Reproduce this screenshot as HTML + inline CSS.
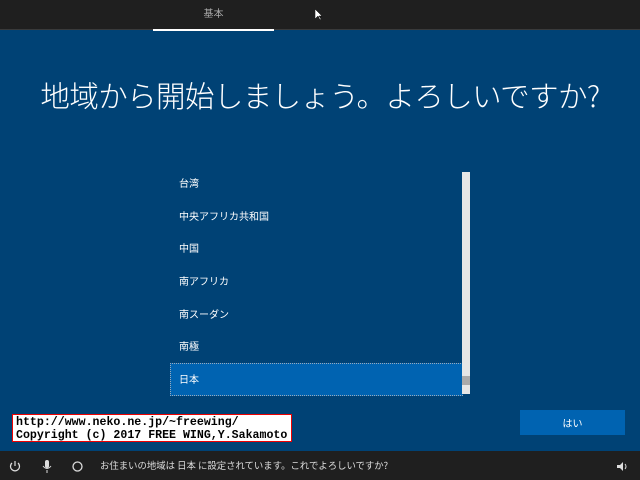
<!DOCTYPE html>
<html><head><meta charset="utf-8"><style>
*{margin:0;padding:0;box-sizing:border-box}
body{width:640px;height:480px;overflow:hidden;background:#004275;font-family:"Liberation Sans","Noto Sans CJK JP",sans-serif;color:#fff;position:relative}
.top{position:absolute;left:0;top:0;width:640px;height:30px;background:#1f1f1f;border-bottom:1px solid #3a3a3a}
.tab{position:absolute;left:153px;top:0;width:121px;height:30px;text-align:center;font-size:10px;line-height:30px;color:#aaa}
.tab:after{content:"";position:absolute;left:0;bottom:-1px;width:121px;height:2px;background:#fff}
h1{position:absolute;left:0;top:74px;width:640px;text-align:center;font-weight:300;font-size:29.5px;line-height:42px;font-family:"Noto Sans CJK JP",sans-serif;letter-spacing:-0.6px}
.list{position:absolute;left:170px;top:167px;width:293px}
.it{height:32.7px;line-height:32px;font-size:10px;padding-left:9px;font-family:"Noto Sans CJK JP",sans-serif}
.sel{background:#0063b1;outline:1px dotted #9ab;outline-offset:-1px}
.sb{position:absolute;left:462px;top:172px;width:8px;height:222px;background:#e6e6e6}
.th{position:absolute;left:462px;top:376px;width:8px;height:9px;background:#aaa}
.btn{position:absolute;left:520px;top:410px;width:105px;height:25px;background:#0063b1;font-size:10px;text-align:center;line-height:25px;font-family:"Noto Sans CJK JP",sans-serif}
.cp{position:absolute;left:12px;top:414px;width:280px;height:28px;background:#fff;border:1px solid #e00;color:#000;font-family:"Liberation Mono",monospace;font-size:11.6px;font-weight:bold;line-height:12.5px;padding:1px 3px 0;white-space:pre;overflow:hidden}
.bot{position:absolute;left:0;top:451px;width:640px;height:29px;background:#1f1f1f;font-size:9.4px;line-height:29px;color:#ddd;font-family:"Noto Sans CJK JP",sans-serif}
</style></head><body>
<div class="top"><div class="tab">基本</div></div>
<svg style="position:absolute;left:315px;top:9px" width="8" height="12"><path d="M0 0 L0 10 L3 7 L5 11 L6 10 L4 7 L7 7 Z" fill="#fff" stroke="#000" stroke-width=".5"/></svg>
<h1>地域から開始しましょう。よろしいですか?</h1>
<div class="list">
<div class="it">台湾</div><div class="it">中央アフリカ共和国</div><div class="it">中国</div><div class="it">南アフリカ</div><div class="it">南スーダン</div><div class="it">南極</div><div class="it sel">日本</div>
</div>
<div class="sb"></div><div class="th"></div>
<div class="btn">はい</div>
<div class="cp"><div style="margin-top:1px">http://www.neko.ne.jp/~freewing/</div><div>Copyright (c) 2017 FREE WING,Y.Sakamoto</div></div>
<div class="bot">
<svg style="position:absolute;left:9px;top:9px" width="12" height="12"><path d="M3 3 A4.5 4.5 0 1 0 9 3" fill="none" stroke="#ddd" stroke-width="1.2"/><path d="M6 1 V6" stroke="#ddd" stroke-width="1.2"/></svg>
<svg style="position:absolute;left:42px;top:9px" width="10" height="13"><rect x="3" y="0" width="4" height="8" rx="2" fill="#ddd"/><path d="M1 6 Q5 11 9 6 M5 10 V13" fill="none" stroke="#ddd"/></svg>
<svg style="position:absolute;left:72px;top:10px" width="11" height="11"><circle cx="5.5" cy="5.5" r="4.5" fill="none" stroke="#ddd" stroke-width="1.3"/></svg>
<span style="position:absolute;left:100px">お住まいの地域は 日本 に設定されています。これでよろしいですか?</span>
<svg style="position:absolute;left:617px;top:10px" width="12" height="11"><path d="M0 4 H3 L6 1 V10 L3 7 H0 Z" fill="#ddd"/><path d="M8 3 Q10 5.5 8 8" fill="none" stroke="#ddd"/></svg>
</div>
</body></html>
